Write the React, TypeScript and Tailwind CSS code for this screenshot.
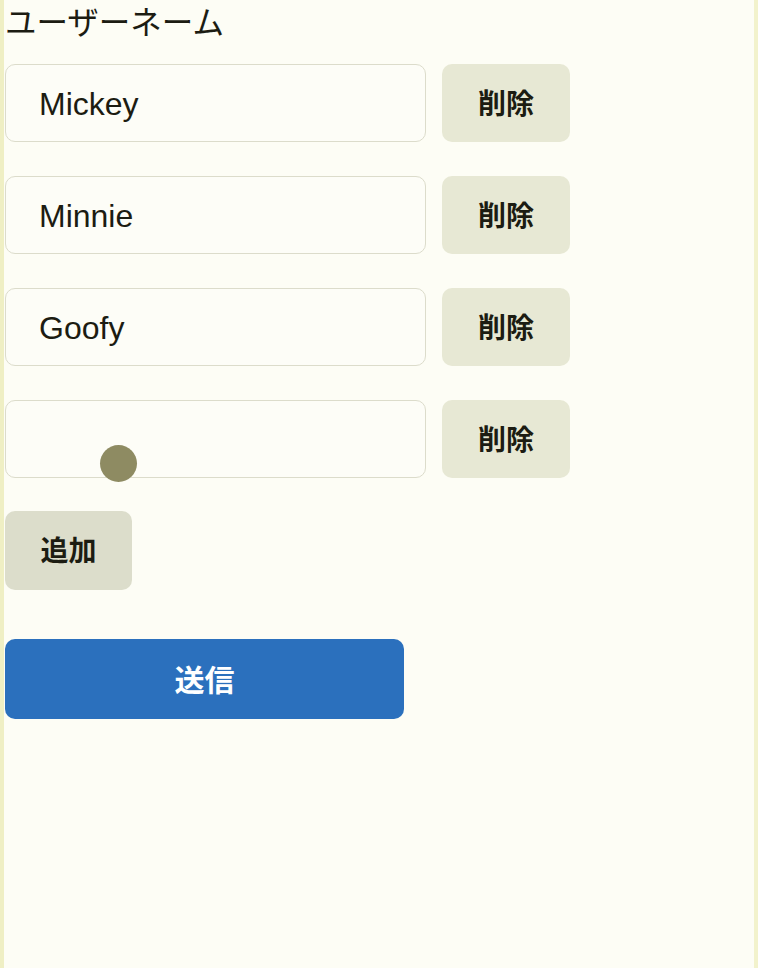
import { useState } from "react";

const fontStack = {
  fontFamily: '"Liberation Sans", "Noto Sans CJK JP", sans-serif',
};

export default function App() {
  const [names, setNames] = useState(["Mickey", "Minnie", "Goofy", ""]);

  return (
    <div
      className="relative min-h-[968px] w-[758px] border-x-[4px] border-l-[#efefc4] border-r-[#f2f2cc] bg-[#fdfdf5] text-[#1c1c12]"
      style={fontStack}
    >
      <div className="pl-px">
        <label className="block pt-[3px] text-[31.5px] leading-[40px]">ユーザーネーム</label>

        <div className="mt-[21px] flex flex-col gap-[34px]">
          {names.map((name, i) => (
            <div key={i} className="flex items-center gap-4">
              <input
                value={name}
                onChange={(e) => setNames(names.map((n, j) => (j === i ? e.target.value : n)))}
                className="h-[78px] w-[421px] rounded-[10px] border border-[#dcdccb] bg-[#fdfdf7] pl-[33px] pt-[2px] text-[32px] text-[#1c1c12] outline-none"
              />
              <button className="h-[78px] w-[128px] rounded-[10px] bg-[#e7e8d4] pt-[4px] text-[28px] font-bold">
                削除
              </button>
            </div>
          ))}
        </div>

        <button
          className="mt-[33px] h-[79px] w-[127px] rounded-[10px] bg-[#dcddcb] pt-[3px] text-[28px] font-bold"
          onClick={() => setNames([...names, ""])}
        >
          追加
        </button>

        <button className="mt-[49px] block h-[80px] w-[399px] rounded-[10px] bg-[#2b70bd] pt-[2px] text-[30px] font-bold text-white">
          送信
        </button>
      </div>

      <div className="absolute left-[96px] top-[445px] h-[37px] w-[37px] rounded-full bg-[#8e8b62]" />
    </div>
  );
}
